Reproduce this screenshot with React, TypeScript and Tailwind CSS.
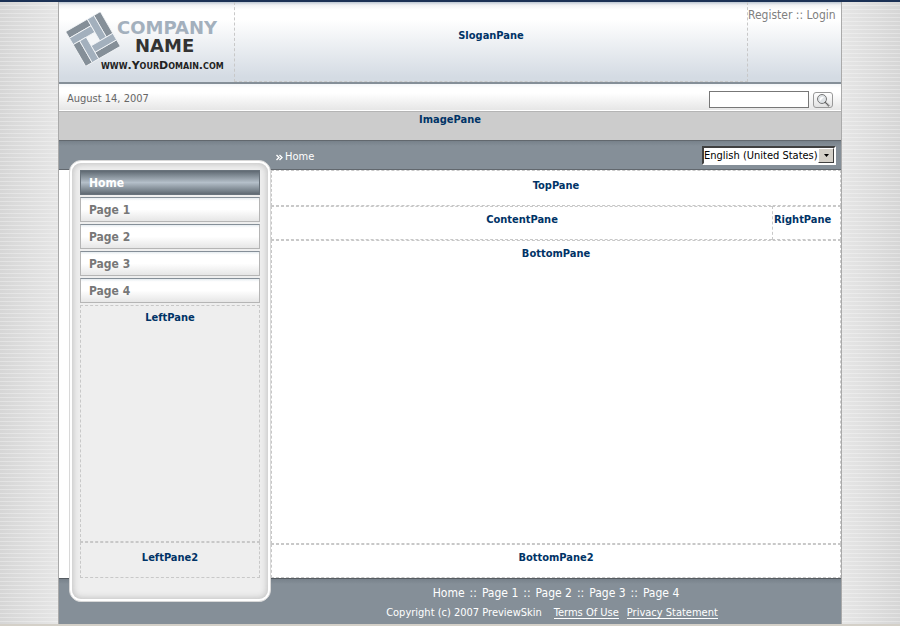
import type { ReactNode } from 'react';

const tahoma = "font-['DejaVu_Sans_Condensed','DejaVu_Sans',sans-serif]";

function Pane({ name, className }: { name: string; className: string }) {
  return (
    <section className={`border-dashed border-[#c8c8c8] text-center text-[11px] leading-4 font-bold text-[#003366] ${className}`}>
      {name}
    </section>
  );
}

function LogoMark() {
  const arms = [0, 90, 180, 270];
  return (
    <svg width="54" height="54" viewBox="-27 -27 54 54" className="shrink-0" aria-hidden="true">
      <rect x="-8" y="-8" width="16" height="16" fill="#f4f6f8" transform="rotate(-30)" />
      {arms.map((angle) => (
        <g key={angle} transform={`rotate(${angle - 30})`} stroke="#f4f6f8" strokeWidth="0.8">
          <rect x="-20" y="-20" width="25" height="7.5" fill="#858f98" />
          <rect x="-20" y="-12.5" width="25" height="7.5" fill="#a3b0bd" />
        </g>
      ))}
    </svg>
  );
}

function NavItem({ children, active }: { children: ReactNode; active?: boolean }) {
  const look = active
    ? 'border-[#68727b] bg-[linear-gradient(#5f6972,#b4bfc9_50%,#5f6972)] text-white'
    : 'border-[#b5b5b5] border-t-[#858f98] bg-[linear-gradient(#e6ecf0,#ffffff_12%,#ffffff_50%,#e6e6e6)] text-[#777777]';
  return (
    <a href="#" className={`block h-[25px] border px-2 text-[12px] leading-6 font-bold ${look}`}>
      {children}
    </a>
  );
}

const pages = ['Page 1', 'Page 2', 'Page 3', 'Page 4'];

export default function App() {
  return (
    <div
      className={`flex min-h-screen flex-col border-t-2 border-b-2 border-t-[#1b3155] border-b-[#d4d0c8] bg-[repeating-linear-gradient(transparent_0_3px,rgba(255,255,255,0.3)_3px_4px),linear-gradient(90deg,#d6d6d6,#e6e6e6_58px,#e6e6e6_calc(100%-58px),#d6d6d6)] text-[11px] leading-4 ${tahoma}`}
    >
      <div className="mx-[58px] flex flex-1 flex-col border-x border-[#aaaaaa] bg-white">
        <header className="flex h-[82px] border-b-2 border-[#858f98] bg-[linear-gradient(#bcc6d2,#f0f1f3_3px,#ffffff_8px,#ffffff_22%,#d4dbe3_94%)]">
          <div className="w-[175px] pt-[10px] pl-[7px]">
            <div className="flex">
              <LogoMark />
              <div className="-ml-[3px] pt-[7px] font-['DejaVu_Sans',sans-serif] text-[18px] leading-[18px] font-bold">
                <div className="text-[#a3b0bd]">COMPANY</div>
                <div className="pl-[18px] text-[#333333]">NAME</div>
              </div>
            </div>
            <div className="-mt-2 pl-[35px] font-['DejaVu_Sans',sans-serif] text-[11px] font-bold text-[#222222] [font-variant:small-caps]">
              www.YourDomain.com
            </div>
          </div>
          <Pane name="SloganPane" className="flex-1 border-x border-b pt-[26px]" />
          <div className="w-[93px] pt-[5px] text-[12px] text-[#808080]">
            <a href="#">Register</a> :: <a href="#">Login</a>
          </div>
        </header>

        <div className="flex h-[27px] items-center border-b border-white bg-[linear-gradient(#f4f6f8,#ffffff_15%,#ffffff_35%,#e6e6e6)] px-2 pt-1 text-[#666666]">
          <div className="flex-1">August 14, 2007</div>
          <form className="flex items-center gap-1" onSubmit={(event) => event.preventDefault()}>
            <input type="text" aria-label="Search" className="h-[17px] w-[100px] border border-[#777777] bg-white px-1" />
            <button
              type="submit"
              aria-label="Search"
              className="mt-0.5 flex h-4 w-5 items-center justify-center rounded-[3px] border border-[#999999] bg-linear-to-b from-white to-[#e2e2e2]"
            >
              <svg width="14" height="14" viewBox="0 0 14 14" aria-hidden="true">
                <circle cx="6" cy="6" r="4.5" fill="#dfe3e6" stroke="#777777" />
                <path d="M4 8a3 3 0 0 1 4-4z" fill="#ffffff" />
                <path d="M9 9l4 4" stroke="#555555" strokeWidth="2" strokeDasharray="1 0.6" />
              </svg>
            </button>
          </form>
        </div>

        <Pane name="ImagePane" className="h-[29px] border-t border-solid border-t-[#b4b4b4] bg-[#cccccc]" />

        <div className="flex h-[30px] items-center border-y border-[#62686e] bg-[linear-gradient(#77818a,#858f98_5px)] pr-[5px] pl-[217px] text-white">
          <nav aria-label="Breadcrumb" className="flex flex-1 items-center gap-0.5 pt-1">
            <svg width="7" height="7" viewBox="0 0 7 7" fill="none" stroke="#ffffff" aria-hidden="true">
              <path d="M0.5 1l2.5 2.5L0.5 6M3.5 1L6 3.5 3.5 6" strokeWidth="1.4" />
            </svg>
            <a href="#">Home</a>
          </nav>
          <div className="relative">
            <select
              aria-label="Language"
              className="block h-[19px] w-[134px] appearance-none border-2 border-t-[#404040] border-r-white border-b-white border-l-[#404040] bg-white p-0 text-[11px] leading-4 text-black"
            >
              <option>English (United States)</option>
            </select>
            <span className="pointer-events-none absolute top-0.5 right-0.5 flex h-[15px] w-4 items-center justify-center border border-t-white border-r-[#404040] border-b-[#404040] border-l-white bg-[#d4d0c8]">
              <svg width="5" height="3" viewBox="0 0 5 3" aria-hidden="true">
                <path d="M0 0h5L2.5 3z" fill="#000000" />
              </svg>
            </span>
          </div>
        </div>

        <div className="flex min-h-[408px] flex-1">
          <aside className="relative z-10 -mt-[10px] -mb-6 ml-[10px] flex w-[202px] flex-col rounded-[12px] border border-[#d8d8d8] bg-white p-0.5">
            <div className="flex flex-1 flex-col rounded-[9px] bg-[#eeeeee] px-2 pt-[7px] pb-[21px] shadow-[inset_0_0_6px_1px_#c0c0c0]">
              <nav aria-label="Pages" className="flex flex-col gap-0.5 pb-0.5">
                <NavItem active>Home</NavItem>
                {pages.map((page) => (
                  <NavItem key={page}>{page}</NavItem>
                ))}
              </nav>
              <Pane name="LeftPane" className="flex-1 border pt-1" />
              <Pane name="LeftPane2" className="h-9 border pt-[7px]" />
            </div>
          </aside>
          <main className="flex flex-1 flex-col">
            <Pane name="TopPane" className="h-9 border pt-[7px]" />
            <div className="flex h-[34px]">
              <Pane name="ContentPane" className="flex-1 border-y border-l pt-[5px]" />
              <Pane name="RightPane" className="w-[69px] border pt-[5px] pl-px text-left" />
            </div>
            <Pane name="BottomPane" className="flex-1 border pt-[5px]" />
            <Pane name="BottomPane2" className="h-[34px] border pt-[5px]" />
          </main>
        </div>

        <footer className="h-[46px] border-t border-[#555b61] bg-[linear-gradient(#77818a,#858f98_5px)] pt-1.5 pl-[212px] text-center text-white">
          <nav aria-label="Footer" className="flex justify-center gap-[5px] text-[12px]">
            <a href="#">Home</a>
            {pages.map((page) => (
              <span key={page} className="flex gap-[5px]">
                <span>::</span>
                <a href="#">{page}</a>
              </span>
            ))}
          </nav>
          <div className="flex justify-center gap-2 pt-1 pr-2">
            <span className="pr-1">Copyright (c) 2007 PreviewSkin</span>
            <a href="#" className="h-3.5 border-b border-white">Terms Of Use</a>
            <a href="#" className="h-3.5 border-b border-white">Privacy Statement</a>
          </div>
        </footer>
      </div>
    </div>
  );
}
